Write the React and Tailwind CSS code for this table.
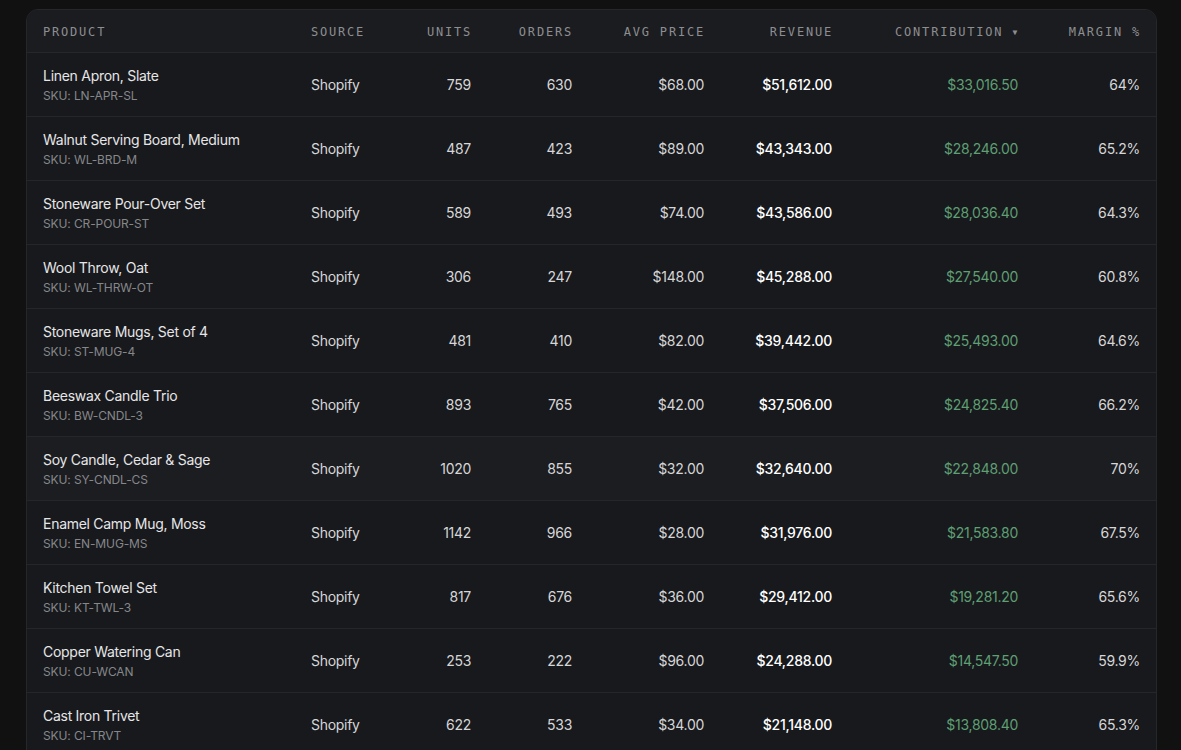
import React from "react";

const rows = [
  ["Linen Apron, Slate", "LN-APR-SL", "759", "630", "$68.00", "$51,612.00", "$33,016.50", "64%"],
  ["Walnut Serving Board, Medium", "WL-BRD-M", "487", "423", "$89.00", "$43,343.00", "$28,246.00", "65.2%"],
  ["Stoneware Pour-Over Set", "CR-POUR-ST", "589", "493", "$74.00", "$43,586.00", "$28,036.40", "64.3%"],
  ["Wool Throw, Oat", "WL-THRW-OT", "306", "247", "$148.00", "$45,288.00", "$27,540.00", "60.8%"],
  ["Stoneware Mugs, Set of 4", "ST-MUG-4", "481", "410", "$82.00", "$39,442.00", "$25,493.00", "64.6%"],
  ["Beeswax Candle Trio", "BW-CNDL-3", "893", "765", "$42.00", "$37,506.00", "$24,825.40", "66.2%"],
  ["Soy Candle, Cedar & Sage", "SY-CNDL-CS", "1020", "855", "$32.00", "$32,640.00", "$22,848.00", "70%"],
  ["Enamel Camp Mug, Moss", "EN-MUG-MS", "1142", "966", "$28.00", "$31,976.00", "$21,583.80", "67.5%"],
  ["Kitchen Towel Set", "KT-TWL-3", "817", "676", "$36.00", "$29,412.00", "$19,281.20", "65.6%"],
  ["Copper Watering Can", "CU-WCAN", "253", "222", "$96.00", "$24,288.00", "$14,547.50", "59.9%"],
  ["Cast Iron Trivet", "CI-TRVT", "622", "533", "$34.00", "$21,148.00", "$13,808.40", "65.3%"],
];

const grid = "grid grid-cols-[268px_100px_92px_101px_132px_128px_186px_1fr]";

export default function App() {
  return (
    <div className="min-h-[750px] bg-[#111112] pt-[9px] pl-[26px] overflow-hidden" style={{ fontFamily: "Inter, 'Noto Sans', sans-serif" }}>
      <div className="w-[1131px] rounded-t-[12px] border border-[#26272b] bg-[#18191c] overflow-hidden">
        <div
          className={`${grid} h-[43px] items-center pt-[2px] bg-[#1b1c1f] border-b border-[#26272b] text-[12px] tracking-[0.15em] text-[#8d8e92]`}
          style={{ fontFamily: "'DejaVu Sans Mono', 'Liberation Mono', monospace" }}
        >
          <div className="pl-4">PRODUCT</div>
          <div className="pl-4">SOURCE</div>
          <div className="pr-[15px] text-right">UNITS</div>
          <div className="pr-[15px] text-right">ORDERS</div>
          <div className="pr-[15px] text-right">AVG PRICE</div>
          <div className="pr-[15px] text-right">REVENUE</div>
          <div className="pr-[15px] text-right">CONTRIBUTION <span className="text-[8px] align-middle">▼</span></div>
          <div className="pr-[15px] text-right">MARGIN %</div>
        </div>
        {rows.map((r, i) => (
          <div
            key={i}
            className={`${grid} h-16 items-center border-b border-[#25262a] text-[14px] tracking-[-0.02em] text-[#d6d6d8] ${i === 6 ? "bg-[#1c1d21]" : ""}`}
          >
            <div className="pl-4 flex flex-col">
              <span className="text-[14px] leading-5 text-[#e6e6e8]">{r[0]}</span>
              <span className="text-[12px] leading-4 mt-[2px] tracking-[-0.01em] text-[#86878b]">SKU: {r[1]}</span>
            </div>
            <div className="pl-4">Shopify</div>
            <div className="pr-4 text-right">{r[2]}</div>
            <div className="pr-4 text-right">{r[3]}</div>
            <div className="pr-4 text-right">{r[4]}</div>
            <div className="pr-4 text-right font-medium text-white">{r[5]}</div>
            <div className="pr-4 text-right text-[#5e9f74]">{r[6]}</div>
            <div className="pr-4 text-right">{r[7]}</div>
          </div>
        ))}
      </div>
    </div>
  );
}
